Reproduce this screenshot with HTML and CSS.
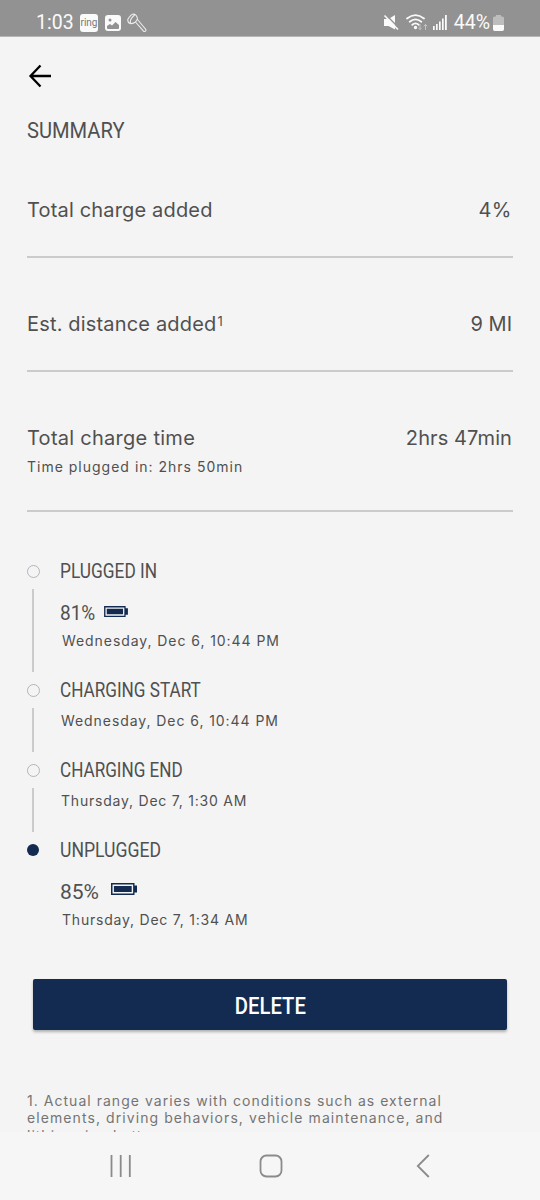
FILE: index.html
```html
<!DOCTYPE html>
<html lang="en">
<head>
<meta charset="utf-8">
<title>Charge summary</title>
<link rel="stylesheet" href="styles.css">
</head>
<body>
<div class="screen">
  <header class="status">
    <span class="clock">1:03</span>
    <span class="ring"><span class="ring-label">ring</span></span>
    <svg class="photo" width="16" height="16" viewBox="0 0 16 16"><rect width="16" height="16" rx="3" fill="#fafafa"/><circle cx="5" cy="5" r="1.500" fill="#929292"/><path d="M2 13v-2l3-2 2 1.500 3.500-3.500 3.500 3v3q0 1-1 1H3q-1 0-1-1z" fill="#929292"/></svg>
    <svg class="tool" width="20" height="20" viewBox="0 0 20 20" fill="none" stroke="#ececec" stroke-width="1.100" stroke-linejoin="round" stroke-linecap="round"><path d="M1 6Q0 9 3 10.500Q6 11 8.500 9L10.500 6Q10 2 7 1Q4 1 1 6zM3.500 9.500Q2.500 6.500 7.500 2M8.500 9L16.500 18.200Q18 19 19 17.500Q19 16 18 15.500L10.500 6.500"/></svg>
    <div class="signals">
      <svg width="16" height="17" viewBox="0 0 16 17"><path d="M1 5h4.500L12 1v14.500L5.500 12H1z" fill="#fafafa"/><path d="M2.500 .5L16 14" stroke="#929292" stroke-width="1.500"/><path d="M1.500 1.500L15 15.500" stroke="#fafafa" stroke-width="1.600"/></svg>
      <svg class="wifi" width="22" height="17" viewBox="0 0 22 17" fill="none" stroke="#fafafa" stroke-width="1.800" stroke-linecap="round"><path d="M1 4.500Q9.500-2.200 18 4.500M3.700 7.800Q9.500 3 15.300 7.800M6.300 10.800Q9.500 8 12.700 10.800"/><circle cx="9.500" cy="13.500" r=".8" fill="#fafafa"/><path d="M14 10.500v5m-1.500-1.500l1.500 1.500 1.500-1.500M19.500 15.500v-5m-1.500 1.500l1.500-1.500 1.500 1.500" stroke="#c4c4c4" stroke-width="1"/></svg>
      <svg class="bars" width="14" height="15" viewBox="0 0 14 15" fill="#fafafa"><path d="M0 11h1.700v4H0zM3 9h1.700v6H3zM6 6.500h1.700V15H6zM9 3.500h1.700V15H9zM12 0h1.800v15H12z"/></svg>
      <span class="level">44%</span>
      <svg class="cell" width="11" height="16" viewBox="0 0 11 16"><path d="M3 0h5v1.500h1.500Q11 1.500 11 3v11q0 2-2 2H2q-2 0-2-2V3q0-1.500 1.500-1.500H3z" fill="#bdbdbd"/><path d="M0 10h11v4q0 2-2 2H2q-2 0-2-2z" fill="#fafafa"/></svg>
    </div>
  </header>

  <main class="content">
    <svg class="back" width="24" height="24" viewBox="0 0 24 24" fill="none" stroke="#000" stroke-width="2.300"><path d="M12.500 1.500L2.500 12l10 10.500M2.500 12h20.500"/></svg>
    <h1 class="title"><span class="narrow n-summary">SUMMARY</span></h1>

    <section class="row"><span class="t-added">Total charge added</span><span class="v-percent">4%</span></section>
    <section class="row"><span class="t-added">Est. distance added<span class="note-mark">1</span></span><span class="v-miles">9 MI</span></section>
    <section class="row row-tall"><span class="t-time">Total charge time</span><span class="v-time">2hrs 47min</span><span class="sub">Time plugged in: 2hrs 50min</span></section>

    <ol class="timeline">
      <li class="step step-first">
        <div class="rail"><i class="dot"></i><i class="stem"></i></div>
        <div class="info">
          <h2 class="name"><span class="narrow n-in">PLUGGED IN</span></h2>
          <p class="charge"><span class="narrow n-81">81%</span><svg class="batt" width="24" height="11" viewBox="0 0 26 12"><path d="M0 0h23.500v2.500H26v7h-2.500V12H0z" fill="#132b50"/><path d="M2.200 2.200h19.200v7.600H2.200z" fill="none" stroke="#f4f4f4" stroke-width="1.400"/></svg></p>
          <p class="date inset">Wednesday, Dec 6, 10:44 PM</p>
        </div>
      </li>
      <li class="step">
        <div class="rail"><i class="dot"></i><i class="stem"></i></div>
        <div class="info">
          <h2 class="name"><span class="narrow n-start">CHARGING START</span></h2>
          <p class="date">Wednesday, Dec 6, 10:44 PM</p>
        </div>
      </li>
      <li class="step">
        <div class="rail"><i class="dot"></i><i class="stem"></i></div>
        <div class="info">
          <h2 class="name"><span class="narrow n-end">CHARGING END</span></h2>
          <p class="date thu">Thursday, Dec 7, 1:30 AM</p>
        </div>
      </li>
      <li class="step step-last">
        <div class="rail"><i class="dot dot-on"></i></div>
        <div class="info">
          <h2 class="name"><span class="narrow n-un">UNPLUGGED</span></h2>
          <p class="charge"><span class="narrow n-85">85%</span><svg class="batt batt-wide" width="26" height="12" viewBox="0 0 26 12"><path d="M0 0h23.500v2.500H26v7h-2.500V12H0z" fill="#132b50"/><path d="M2.200 2.200h19.200v7.600H2.200z" fill="none" stroke="#f4f4f4" stroke-width="1.400"/></svg></p>
          <p class="date inset thu">Thursday, Dec 7, 1:34 AM</p>
        </div>
      </li>
    </ol>

    <button class="delete"><span class="n-delete">DELETE</span></button>

    <p class="footnote"><span class="f1">1. Actual range varies with conditions such as external</span><br><span class="f2">elements, driving behaviors, vehicle maintenance, and</span><br>lithium-ion battery age.</p>
  </main>

  <nav class="nav">
    <svg class="recents" width="22" height="22" viewBox="0 0 22 22" stroke="#8b8b8b" stroke-width="1.800"><path d="M1.500 0v22M10.700 0v22M19.800 0v22"/></svg>
    <svg class="home" width="24" height="24" viewBox="0 0 24 24" fill="none" stroke="#8b8b8b" stroke-width="1.800"><rect x="1.500" y="1.500" width="21" height="21" rx="6"/></svg>
    <svg class="prev" width="14" height="24" viewBox="0 0 14 24" fill="none" stroke="#8b8b8b" stroke-width="1.800"><path d="M12.800 1L1.800 12l11 11"/></svg>
  </nav>
</div>
</body>
</html>
```
FILE: styles.css
```css
* { box-sizing: border-box; margin: 0; padding: 0; }
body { background: #f4f4f4; color: #505050; font-family: Inter, sans-serif; }
.screen { width: 540px; height: 1200px; overflow: hidden; display: flex; flex-direction: column; }

.status { height: 37px; flex: none; background: #929292; border-bottom: 1px solid #b5b5b5; padding: 9px 36px 0; display: flex; align-items: center; font: 19.500px/28px Roboto, sans-serif; color: #fafafa; }
.clock { width: 44px; }
.ring { width: 18px; height: 18px; border-radius: 3px; background: #fafafa; display: flex; justify-content: center; align-items: center; font: 10px/12px Roboto, sans-serif; color: #777; }
.photo { margin-left: 7px; }
.tool { margin-left: 6px; }
.signals { margin-left: auto; display: flex; align-items: center; }
.wifi { margin-left: 7px; }
.bars { margin-left: 5px; }
.level { margin-left: 7px; }
.cell { margin-left: 3px; }

.content { flex: 1; min-height: 0; overflow: hidden; padding: 27px 27px 0; display: flex; flex-direction: column; }
.back { flex: none; margin-left: 1px; }
.title { flex: none; height: 56px; padding-top: 28px; font: 400 22.500px/28px Roboto, sans-serif; }
.narrow { display: inline-block; transform-origin: 0 50%; white-space: nowrap; }
.n-summary { transform: scaleX(.895); }
.n-in { transform: scaleX(.865); }
.n-start { transform: scaleX(.857); }
.n-end { transform: scaleX(.855); }
.n-un { transform: scaleX(.88); }
.n-81 { transform: scaleX(.95); }
.n-85 { transform: scaleX(1.05); }

.row { flex: none; height: 114px; padding: 52px 1px 0 0; border-bottom: 2px solid #cbcbcb; display: flex; flex-wrap: wrap; justify-content: space-between; align-content: flex-start; font-size: 20px; line-height: 28px; white-space: nowrap; }
.row-tall { height: 140px; }
.t-added { letter-spacing: .17px; }
.t-time { letter-spacing: .27px; }
.v-percent { letter-spacing: .5px; }
.v-time { letter-spacing: .1px; }
.note-mark { display: inline-block; font-size: 13px; line-height: 12px; vertical-align: 5px; margin-left: 1px; }
.sub { width: 100%; font-size: 14px; line-height: 30px; letter-spacing: 1px; }

.timeline { flex: none; list-style: none; padding-top: 45px; }
.step { height: 80px; display: flex; }
.step-first { height: 119px; }
.step-last { height: 122px; }
.rail { width: 13px; margin-right: 20px; padding-top: 8px; display: flex; flex-direction: column; align-items: center; }
.dot { width: 13px; height: 13px; border: 1px solid #b3b5bd; border-radius: 50%; flex: none; }
.dot-on { width: 12px; height: 12px; margin-right: 1px; background: #132b50; border: 0; }
.stem { width: 2px; flex: 1; margin: 11px 1px 4px 0; background: #cbcbcb; }
.name { font: 400 20px/28px Roboto, sans-serif; height: 28px; }
.charge { font: 20px/28px Roboto, sans-serif; height: 42px; padding-top: 14px; display: flex; }
.batt { margin: 7px 0 0 7px; }
.batt-wide { margin: 5px 0 0 14px; }
.date { font-size: 14px; line-height: 20px; margin-top: 7px; padding-left: 1px; letter-spacing: .93px; white-space: nowrap; }
.thu { letter-spacing: .78px; }
.inset { margin-top: 4px; padding-left: 2px; }

.delete { flex: none; height: 51px; margin: 21px 6px 0; padding-top: 4px; border: 0; border-radius: 2px; background: #132b50; color: #fff; box-shadow: 0 2px 3px rgba(0,0,0,.28); font: 500 23px/47px Roboto, sans-serif; }
.n-delete { display: inline-block; transform: scaleX(.88); }
.footnote { flex: none; margin-top: 62px; font-size: 14px; line-height: 17.300px; letter-spacing: 1px; color: #747474; white-space: nowrap; }
.f1 { letter-spacing: 1.030px; }
.f2 { letter-spacing: 1.080px; }

.nav { height: 68px; flex: none; background: #f6f6f6; display: flex; align-items: center; padding-left: 110px; }
.home { margin-left: 127px; }
.prev { margin-left: 133px; }
```
